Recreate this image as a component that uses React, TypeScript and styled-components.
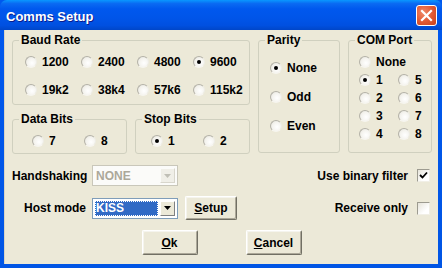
import React from 'react';
import styled, { createGlobalStyle } from 'styled-components';

const GlobalStyle = createGlobalStyle`
  html, body {
    margin: 0;
    padding: 0;
    background: #ece9d8;
  }
  * {
    box-sizing: border-box;
  }
`;

const FONT = `"Liberation Sans", Arial, sans-serif`;

export default function App() {
  return (
    <>
      <GlobalStyle />
      <Window>
        <TitleBar>
          <Title>Comms Setup</Title>
          <CloseButton aria-label="Close">
            <svg width="13" height="13" viewBox="0 0 13 13">
              <path d="M2 2 L11 11 M11 2 L2 11" stroke="#fff" strokeWidth="2.2" strokeLinecap="square" />
            </svg>
          </CloseButton>
        </TitleBar>
        <Client>
          <TopGrid>
            <LeftColumn>
              <Group $height={71}>
                <Legend>Baud Rate</Legend>
                <BaudGrid>
                  {['1200', '2400', '4800', '9600', '19k2', '38k4', '57k6', '115k2'].map((v) => (
                    <Radio key={v} label={v} checked={v === '9600'} />
                  ))}
                </BaudGrid>
              </Group>
              <BitsRow>
                <Group $height={41}>
                  <Legend>Data Bits</Legend>
                  <PairRow $left={19}>
                    <Radio label="7" />
                    <Radio label="8" />
                  </PairRow>
                </Group>
                <Group $height={41}>
                  <Legend>Stop Bits</Legend>
                  <PairRow $left={15}>
                    <Radio label="1" checked />
                    <Radio label="2" />
                  </PairRow>
                </Group>
              </BitsRow>
            </LeftColumn>
            <Group $height={119}>
              <Legend>Parity</Legend>
              <ParityList>
                <Radio label="None" checked />
                <Radio label="Odd" />
                <Radio label="Even" />
              </ParityList>
            </Group>
            <Group $height={119}>
              <Legend>COM Port</Legend>
              <ComGrid>
                <ComNone>
                  <Radio label="None" />
                </ComNone>
                {['1', '5', '2', '6', '3', '7', '4', '8'].map((v) => (
                  <Radio key={v} label={v} checked={v === '1'} />
                ))}
              </ComGrid>
            </Group>
          </TopGrid>

          <OptionRow $top={11}>
            <LeftControls>
              <FieldLabel $width={80}>Handshaking</FieldLabel>
              <Combo $disabled>
                <ComboText $disabled>NONE</ComboText>
                <ComboArrow $disabled>
                  <svg width="7" height="4" viewBox="0 0 7 4">
                    <path d="M0 0 H7 L3.5 4 Z" fill="#c0bfb6" />
                  </svg>
                </ComboArrow>
              </Combo>
            </LeftControls>
            <CheckOption>
              <span>Use binary filter</span>
              <CheckBox>
                <svg width="9" height="9" viewBox="0 0 9 9">
                  <path d="M1 4 L3.5 6.5 L8 1.5" stroke="#000" strokeWidth="1.8" fill="none" />
                </svg>
              </CheckBox>
            </CheckOption>
          </OptionRow>

          <OptionRow $top={10}>
            <LeftControls>
              <FieldLabel $width={80} $indent={12}>Host mode</FieldLabel>
              <Combo>
                <ComboText>
                  <Selected>KISS</Selected>
                </ComboText>
                <ComboArrow>
                  <svg width="7" height="4" viewBox="0 0 7 4">
                    <path d="M0 0 H7 L3.5 4 Z" fill="#000" />
                  </svg>
                </ComboArrow>
              </Combo>
              <PushButton $width={52} $height={24}>
                <u>S</u>etup
              </PushButton>
            </LeftControls>
            <CheckOption>
              <span>Receive only</span>
              <CheckBox />
            </CheckOption>
          </OptionRow>

          <ButtonRow>
            <PushButton $width={56} $height={25}>
              <u>O</u>k
            </PushButton>
            <PushButton $width={56} $height={25}>
              <u>C</u>ancel
            </PushButton>
          </ButtonRow>
        </Client>
      </Window>
    </>
  );
}

type RadioProps = { label: string; checked?: boolean };

const Radio: React.FC<RadioProps> = ({ label, checked = false }) => (
  <RadioItem>
    <RadioCircle $checked={checked} />
    <span>{label}</span>
  </RadioItem>
);

const Window = styled.div`
  width: 442px;
  height: 268px;
  display: flex;
  flex-direction: column;
  background: linear-gradient(180deg, #0058ee 0%, #0055e5 100%);
  font-family: ${FONT};
  font-weight: bold;
  font-size: 12px;
  color: #000;
`;

const TitleBar = styled.div`
  height: 30px;
  flex: none;
  display: flex;
  align-items: center;
  justify-content: space-between;
  padding: 0 5px 0 6px;
  background: linear-gradient(
    180deg,
    #0997ff 0%,
    #0a6af2 12%,
    #0058ee 30%,
    #0055e9 60%,
    #0050e0 85%,
    #0046c8 100%
  );
  border-radius: 7px 7px 0 0;
`;

const Title = styled.div`
  color: #fff;
  font-size: 13px;
  font-weight: bold;
  text-shadow: 1px 1px 0 #0a1c8c;
  padding-top: 2px;
`;

const CloseButton = styled.div`
  width: 21px;
  height: 21px;
  margin-top: 1px;
  border: 1px solid #fff;
  border-radius: 3px;
  display: flex;
  align-items: center;
  justify-content: center;
  background: radial-gradient(circle at 35% 35%, #f08a6a 0%, #e25a35 50%, #c8401c 100%);
`;

const Client = styled.div`
  flex: 1;
  margin: 0 4px 4px 4px;
  padding: 4px 7px 0 7px;
  background: #ece9d8;
  display: flex;
  flex-direction: column;
  border-left: 1px solid #d8d4c4;
`;

const TopGrid = styled.div`
  display: grid;
  grid-template-columns: 238px 82px 84px;
  column-gap: 8px;
  align-items: start;
`;

const LeftColumn = styled.div`
  display: flex;
  flex-direction: column;
  gap: 8px;
`;

const BitsRow = styled.div`
  display: grid;
  grid-template-columns: 115px 115px;
  column-gap: 8px;
`;

const Group = styled.fieldset<{ $height: number }>`
  margin: 0;
  padding: 0;
  height: ${({ $height }) => $height}px;
  border: 1px solid #d0d0bf;
  border-radius: 3px;
  min-width: 0;
`;

const Legend = styled.legend`
  margin-left: 6px;
  padding: 0 2px;
  line-height: 13px;
  font-size: 12px;
`;

const RadioItem = styled.label`
  display: flex;
  align-items: center;
  gap: 5px;
  height: 14px;
  white-space: nowrap;
`;

const RadioCircle = styled.span<{ $checked: boolean }>`
  position: relative;
  width: 12px;
  height: 12px;
  flex: none;
  border-radius: 50%;
  border: 1px solid;
  border-color: #b4b2a8 #eeede5 #f6f5ef #b4b2a8;
  background: radial-gradient(circle at 60% 60%, #ffffff 0%, #f4f3ee 55%, #dedcd2 100%);
  &::after {
    content: '';
    display: ${({ $checked }) => ($checked ? 'block' : 'none')};
    position: absolute;
    left: 3px;
    top: 3px;
    width: 4px;
    height: 4px;
    border-radius: 50%;
    background: #000;
  }
`;

const BaudGrid = styled.div`
  display: grid;
  grid-template-columns: repeat(4, 56px);
  row-gap: 14px;
  padding: 8px 0 0 12px;
`;

const PairRow = styled.div<{ $left: number }>`
  display: grid;
  grid-template-columns: 52px 52px;
  padding: 8px 0 0 ${({ $left }) => $left}px;
`;

const ParityList = styled.div`
  display: flex;
  flex-direction: column;
  gap: 15px;
  padding: 14px 0 0 11px;
`;

const ComGrid = styled.div`
  display: grid;
  grid-template-columns: 39px 39px;
  row-gap: 4px;
  padding: 8px 0 0 10px;
`;

const ComNone = styled.div`
  grid-column: 1 / span 2;
`;

const OptionRow = styled.div<{ $top: number }>`
  display: flex;
  align-items: center;
  justify-content: space-between;
  margin-top: ${({ $top }) => $top}px;
  padding-right: 1px;
`;

const LeftControls = styled.div`
  display: flex;
  align-items: center;
`;

const FieldLabel = styled.span<{ $width: number; $indent?: number }>`
  width: ${({ $width }) => $width}px;
  padding-left: ${({ $indent = 0 }) => $indent}px;
`;

const Combo = styled.div<{ $disabled?: boolean }>`
  width: 86px;
  height: 21px;
  display: flex;
  align-items: stretch;
  padding: 2px;
  border: 1px solid ${({ $disabled }) => ($disabled ? '#c9c7ba' : '#7f9db9')};
  background: ${({ $disabled }) => ($disabled ? '#fbfbf9' : '#fff')};
  margin-right: 7px;
`;

const ComboText = styled.div<{ $disabled?: boolean }>`
  flex: 1;
  display: flex;
  align-items: center;
  color: ${({ $disabled }) => ($disabled ? '#aca899' : '#000')};
  padding-left: ${({ $disabled }) => ($disabled ? '1px' : '0')};
`;

const Selected = styled.span`
  flex: 1;
  align-self: stretch;
  display: flex;
  align-items: center;
  padding-left: 1px;
  background: #316ac5;
  color: #fff;
  outline: 1px dotted #fff;
  outline-offset: -1px;
  margin-right: 2px;
`;

const ComboArrow = styled.div<{ $disabled?: boolean }>`
  width: 15px;
  display: flex;
  align-items: center;
  justify-content: center;
  background: ${({ $disabled }) => ($disabled ? '#f0efe8' : '#ece9d8')};
  border: 1px solid;
  border-color: ${({ $disabled }) =>
    $disabled ? '#fbfbf9 #d8d6cc #d8d6cc #fbfbf9' : '#ffffff #808080 #808080 #ffffff'};
`;

const PushButton = styled.div<{ $width: number; $height: number }>`
  width: ${({ $width }) => $width}px;
  height: ${({ $height }) => $height}px;
  display: flex;
  align-items: center;
  justify-content: center;
  background: #ece9d8;
  border: 1px solid;
  border-color: #ffffff #716f64 #716f64 #ffffff;
  box-shadow: inset -1px -1px 0 #aca899, inset 1px 1px 0 #f5f4ee;
  border-radius: 2px;
  u {
    text-decoration-thickness: 1px;
    text-underline-offset: 1px;
  }
`;

const CheckOption = styled.div`
  display: flex;
  align-items: center;
  gap: 9px;
`;

const CheckBox = styled.span`
  width: 13px;
  height: 13px;
  display: flex;
  align-items: center;
  justify-content: center;
  border: 1px solid;
  border-color: #9d9b90 #f1efe6 #f1efe6 #9d9b90;
  background: linear-gradient(135deg, #e6e4da 0%, #ffffff 70%);
`;

const ButtonRow = styled.div`
  display: flex;
  justify-content: center;
  gap: 48px;
  margin-top: 10px;
`;
